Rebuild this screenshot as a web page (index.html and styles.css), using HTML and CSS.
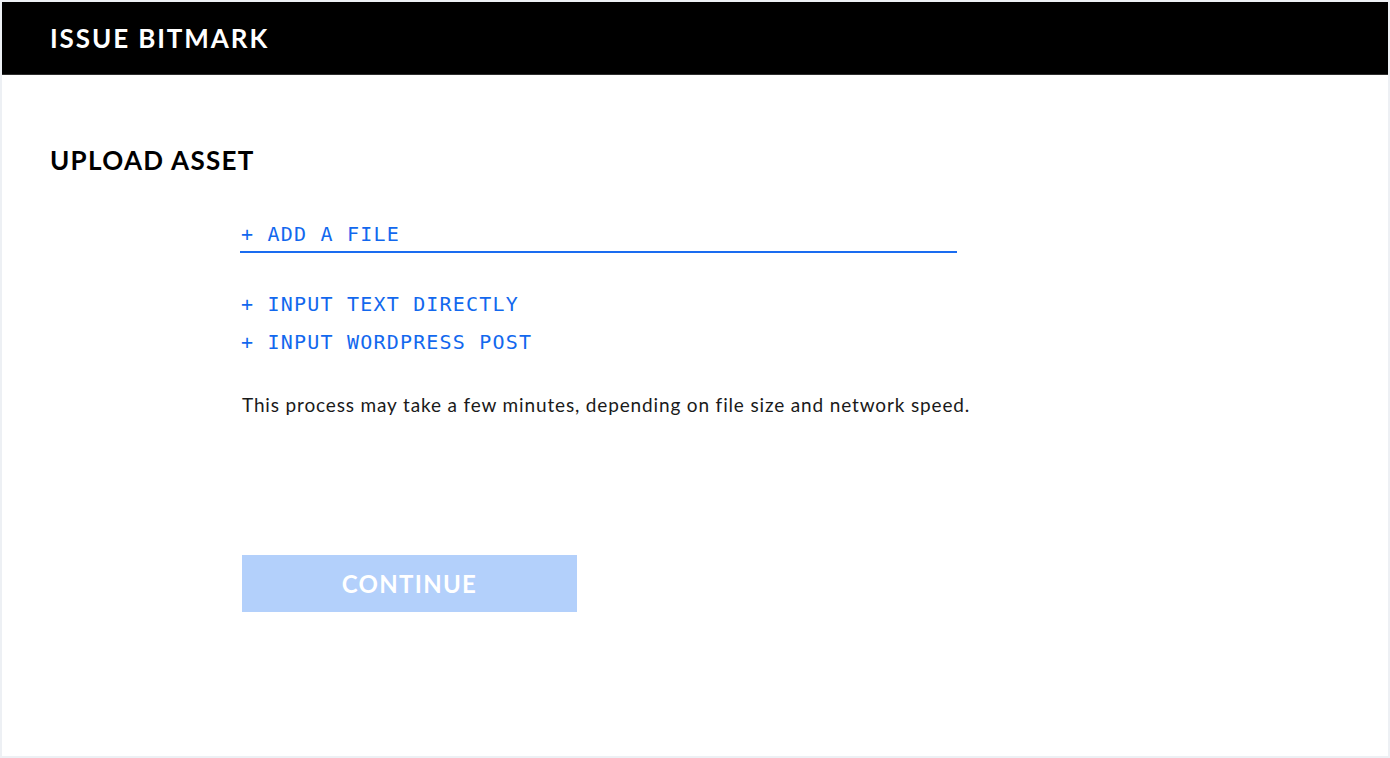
FILE: index.html
```html
<!DOCTYPE html>
<html>
<head>
<meta charset="utf-8">
<link rel="stylesheet" href="styles.css">
</head>
<body>
<div class="card">
  <header class="topbar"><h1 class="title">ISSUE BITMARK</h1></header>
  <main class="content">
    <h2 class="section-title">UPLOAD ASSET</h2>
    <div class="form">
      <div class="add-file"><span class="link">+ ADD A FILE</span></div>
      <div class="options">
        <span class="link">+ INPUT TEXT DIRECTLY</span>
        <span class="link">+ INPUT WORDPRESS POST</span>
      </div>
      <p class="note">This process may take a few minutes, depending on file size and network speed.</p>
      <button class="continue">CONTINUE</button>
    </div>
  </main>
</div>
</body>
</html>
```
FILE: styles.css
```css
html, body {
  margin: 0;
  padding: 0;
}
body {
  background: #edf0f4;
  padding: 2px;
  height: 758px;
  box-sizing: border-box;
  font-family: Lato, "Noto Sans", sans-serif;
}
.card {
  background: #fff;
  height: 754px;
  display: flex;
  flex-direction: column;
}
.topbar {
  background: #000;
  height: 72px;
  border-bottom: 1px solid #2e2e2e;
  display: flex;
  align-items: center;
  padding-left: 48px;
}
.title {
  margin: 0;
  color: #fff;
  font-size: 26px;
  font-weight: 700;
  letter-spacing: 1.9px;
}
.content {
  padding: 0 48px;
}
.section-title {
  margin: 70px 0 0;
  font-size: 26px;
  font-weight: 700;
  color: #000;
  line-height: 30px;
  letter-spacing: 1.3px;
}
.form {
  margin-left: 190px;
  width: 717px;
  display: flex;
  flex-direction: column;
}
.link {
  font-family: "DejaVu Sans Mono", monospace;
  font-size: 20px;
  letter-spacing: 1.2px;
  color: #1268ee;
  line-height: 38px;
  padding-left: 1px;
}
.add-file {
  margin-top: 40px;
  border-bottom: 2px solid #1a6cf0;
  height: 36px;
  display: flex;
  align-items: flex-end;
}
.add-file .link {
  line-height: 34px;
}
.options {
  margin-top: 32px;
  display: flex;
  flex-direction: column;
}
.note {
  margin: 32px 0 0 2px;
  font-size: 19px;
  letter-spacing: 0.85px;
  color: #1a1a1a;
  white-space: nowrap;
}
.continue {
  margin: 139px 0 0 2px;
  width: 335px;
  height: 57px;
  border: 0;
  background: #b3d0fb;
  color: #fff;
  font-family: Lato, sans-serif;
  font-weight: 700;
  font-size: 24px;
  letter-spacing: 1.3px;
  padding: 0;
}
```
